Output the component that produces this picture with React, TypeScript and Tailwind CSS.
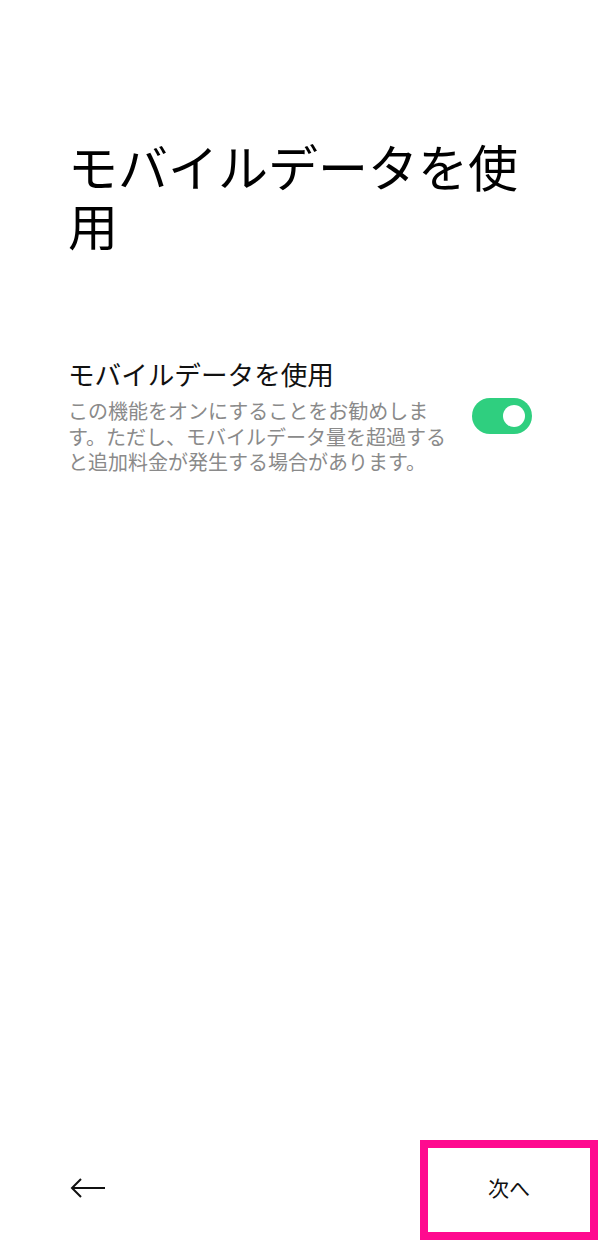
const FONT = '"Noto Sans CJK JP", "Noto Sans", sans-serif';

function Toggle({ on }: { on: boolean }) {
  return (
    <div
      className={`w-[60px] h-[36px] rounded-full flex items-center px-[7px] shrink-0 ${
        on ? 'bg-[#2fcf7f] justify-end' : 'bg-gray-300 justify-start'
      }`}
    >
      <div className="w-[22px] h-[22px] rounded-full bg-white" />
    </div>
  );
}

function BackArrow() {
  return (
    <svg width="36" height="22" viewBox="0 0 36 22" fill="none" stroke="#111" strokeWidth="2">
      <path d="M35 11H3" />
      <path d="M11 2L2 11l9 9" strokeLinejoin="miter" />
    </svg>
  );
}

export default function App() {
  return (
    <div className="h-[1240px] w-full bg-white flex flex-col" style={{ fontFamily: FONT }}>
      <main className="flex-1 px-[68px] pt-[136px]">
        <h1 className="text-[50px] leading-[59px] font-normal text-black pr-[10px]">モバイルデータを使用</h1>

        <div className="mt-[103px] flex items-center gap-[16px]">
          <div className="w-[388px]">
            <p className="text-[26.6px] leading-[34px] text-[#111]">モバイルデータを使用</p>
            <p className="mt-[7px] text-[20px] leading-[25.5px] text-[#8a8a8a]">
              この機能をオンにすることをお勧めします。ただし、モバイルデータ量を超過すると追加料金が発生する場合があります。
            </p>
          </div>
          <Toggle on />
        </div>
      </main>

      <footer className="h-[100px] flex items-stretch justify-between">
        <button className="pl-[70px] pb-[4px] flex items-center">
          <BackArrow />
        </button>
        <button className="w-[178px] mr-[2px] pb-[4px] border-[8px] border-[#ff0a8f] flex items-center justify-center text-[21px] text-[#111]">
          次へ
        </button>
      </footer>
    </div>
  );
}
